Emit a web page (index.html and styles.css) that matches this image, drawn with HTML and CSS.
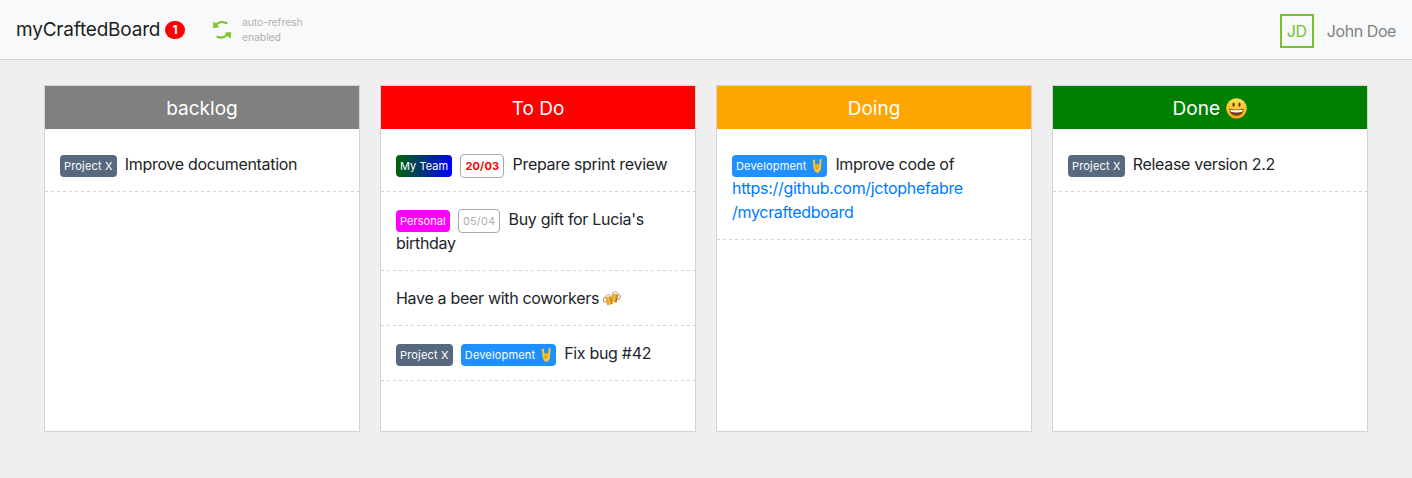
FILE: index.html
```html
<!DOCTYPE html>
<html lang="en">
<head>
<meta charset="utf-8">
<title>myCraftedBoard</title>
<link rel="stylesheet" href="styles.css">
</head>
<body>
<svg class="defs" width="0" height="0" aria-hidden="true">
  <defs>
    <linearGradient id="face" x1="0" y1="0" x2="0" y2="1"><stop offset="0" stop-color="#ffe650"/><stop offset="1" stop-color="#f5a01e"/></linearGradient>
    <linearGradient id="beer" x1="0" y1="0" x2="1" y2="0"><stop offset="0" stop-color="#e08a10"/><stop offset=".5" stop-color="#ffc23a"/><stop offset="1" stop-color="#a85a08"/></linearGradient>
    <symbol id="horns" viewBox="0 0 12 14">
      <path d="M2.9 1.5 3.6 8M9.6 .9 8.9 8" stroke="#ffc928" stroke-width="1.9" stroke-linecap="round"/>
      <path d="M2.6 6.2h7.2v3.6q0 2-1.6 2.8v1H4.5v-1Q2.7 11.7 2.6 9z" fill="#ffc928"/>
      <path d="M5.2 5.6v2.5M7.2 5.6v2.5" stroke="#f4b01f" stroke-width="1.6" stroke-linecap="round"/>
      <path d="M3.8 9h3.6M6.2 9.2q-.8.8-.7 1.8" stroke="#c97b10" stroke-width=".7" fill="none"/>
    </symbol>
    <symbol id="smile" viewBox="0 0 20 20">
      <circle cx="10" cy="10" r="9.8" fill="url(#face)"/>
      <ellipse cx="7.2" cy="6.3" rx="1.1" ry="2.1" fill="#653b12"/>
      <ellipse cx="12.8" cy="6.3" rx="1.1" ry="2.1" fill="#653b12"/>
      <path d="M3.2 10.3q6.8 1.6 13.6 0-.4 6.6-6.8 6.6t-6.8-6.6z" fill="#704016"/>
      <path d="M4 11.1q6 1.3 12 0l-.6 2.1q-5.4 1.1-10.8 0z" fill="#fff"/>
    </symbol>
    <symbol id="beers" viewBox="0 0 18 16">
      <g transform="rotate(-12 5.5 10)">
        <path d="M3.2 7H1.6q-1.1 0-1.1 1.2v1.6q0 1.4 1.2 1.4h1.5" fill="none" stroke="#b98d60" stroke-width="1"/>
        <path d="M3.2 6.5h5.6v8.3H3.2z" fill="url(#beer)"/>
        <path d="M2.7 7.2q-.3-2.5 1.5-2.2 1.8-1.5 3.2 0 2-.3 1.8 2.2z" fill="#f4e8d5" stroke="#b99a72" stroke-width=".5"/>
      </g>
      <g transform="rotate(12 12 7)">
        <path d="M14.5 4h1.4q1.1 0 1.1 1.2v2q0 1.4-1.2 1.4h-1.3" fill="none" stroke="#b98d60" stroke-width="1"/>
        <path d="M9 3.7h5.6v8.5H9z" fill="url(#beer)"/>
        <path d="M8.5 4.4q-.3-2.5 1.5-2.2 1.8-1.5 3.2 0 2-.3 1.8 2.2z" fill="#f4e8d5" stroke="#b99a72" stroke-width=".5"/>
      </g>
    </symbol>
  </defs>
</svg>
<header class="navbar">
  <span class="brand">myCraftedBoard</span>
  <span class="count">1</span>
  <svg class="refresh" width="20" height="20" viewBox="0 0 20 20">
    <path d="M3.5 5Q9-.3 15.3 3.7M4.6 16.3q5.9 3.2 11.2-1.7" fill="none" stroke="#76c32a" stroke-width="2.1"/>
    <path d="M1.6 1.2 .9 8.1l6.5-.9zM19.2 12l-6.7.8 6 6z" fill="#76c32a"/>
  </svg>
  <span class="status">auto-refresh<br>enabled</span>
  <div class="user"><span class="avatar">JD</span><span class="name">John Doe</span></div>
</header>
<main class="board">
  <section class="column">
    <h2 class="title gray">backlog</h2>
    <ul class="tasks">
      <li class="task"><span class="tag project">Project X</span> Improve documentation</li>
    </ul>
  </section>
  <section class="column">
    <h2 class="title red">To Do</h2>
    <ul class="tasks">
      <li class="task"><span class="tag team">My Team</span> <span class="tag date late">20/03</span> Prepare sprint review</li>
      <li class="task"><span class="tag personal">Personal</span> <span class="tag date">05/04</span> Buy gift for Lucia's birthday</li>
      <li class="task">Have a beer with coworkers <svg class="beers"><use href="#beers"/></svg></li>
      <li class="task"><span class="tag project">Project X</span> <span class="tag dev">Development <svg class="horns"><use href="#horns"/></svg></span> Fix bug #42</li>
    </ul>
  </section>
  <section class="column">
    <h2 class="title orange">Doing</h2>
    <ul class="tasks">
      <li class="task"><span class="tag dev">Development <svg class="horns"><use href="#horns"/></svg></span> Improve code of <a class="link">https://github.com/jctophefabre<br>/mycraftedboard</a></li>
    </ul>
  </section>
  <section class="column">
    <h2 class="title green">Done <svg class="smile"><use href="#smile"/></svg></h2>
    <ul class="tasks">
      <li class="task"><span class="tag project">Project X</span> Release version 2.2</li>
    </ul>
  </section>
</main>
</body>
</html>
```
FILE: styles.css
```css
* { box-sizing: border-box; }
body {
  margin: 0;
  height: 478px;
  background: #efefef;
  color: #212529;
  font: 16px/24px Inter, "Liberation Sans", sans-serif;
  letter-spacing: -0.31px;
}
.defs { position: absolute; }
.navbar {
  display: flex;
  align-items: center;
  height: 60px;
  padding: 0 16px;
  background: #f8f9fb;
  border-bottom: 1px solid #d0d0d0;
}
.brand { font-size: 19px; letter-spacing: -0.2px; color: #1c1f22; width: 149px; white-space: nowrap; }
.count {
  width: 20px;
  height: 18px;
  border-radius: 9px;
  background: red;
  color: #fff;
  font-size: 12px;
  font-weight: 700;
  line-height: 18px;
  text-align: center;
  letter-spacing: 0;
}
.refresh { margin-left: 27px; }
.status { margin-left: 10px; font-size: 10.5px; line-height: 15px; letter-spacing: -0.12px; color: #b0b0b0; }
.user { display: flex; align-items: center; margin-left: auto; padding-top: 2px; color: #808080; }
.avatar {
  width: 34px;
  height: 34px;
  border: 2px solid #76c32a;
  color: #76c32a;
  line-height: 31px;
  text-align: center;
}
.name { margin-left: 13px; letter-spacing: -0.42px; }
.board { display: grid; grid-template-columns: repeat(4, 316px); gap: 20px; padding: 25px 44px 0; }
.column { height: 347px; background: #fff; border: 1px solid #d3d3d3; }
.title {
  margin: 0;
  height: 43px;
  color: #fff;
  font-size: 19px;
  font-weight: 400;
  line-height: 45px;
  letter-spacing: 0;
  text-align: center;
}
.gray { background: gray; }
.red { background: red; }
.orange { background: orange; }
.green { background: green; }
.tasks { list-style: none; margin: 0; padding: 8px 0 0; }
.task {
  padding: 15px 15px 16px;
  background: repeating-linear-gradient(to right, #d3d3d3 0 3px, transparent 3px 6px) bottom left / 100% 1px no-repeat;
}
.tag {
  margin-right: 4px;
  padding: 4px;
  border-radius: 4px;
  color: #fff;
  font-size: 11px;
  line-height: 1;
  letter-spacing: 0.16px;
  white-space: nowrap;
}
.project { background: #56697f; }
.team { background: linear-gradient(to right, #006400, #0000ff); letter-spacing: 0.05px; }
.personal { background: #f0f; letter-spacing: 0.05px; }
.dev { background: #1e90ff; }
.date { background: #fff; border: 1px solid #a9a9a9; color: #b0b0b0; }
.late { color: red; font-weight: 700; }
.link { color: #007bff; }
.horns { width: 12px; height: 14px; margin-left: 1.5px; vertical-align: -3px; }
.beers { width: 18px; height: 16px; vertical-align: -2px; }
.smile { width: 21px; height: 21px; margin-left: 1px; vertical-align: -4px; }
```
